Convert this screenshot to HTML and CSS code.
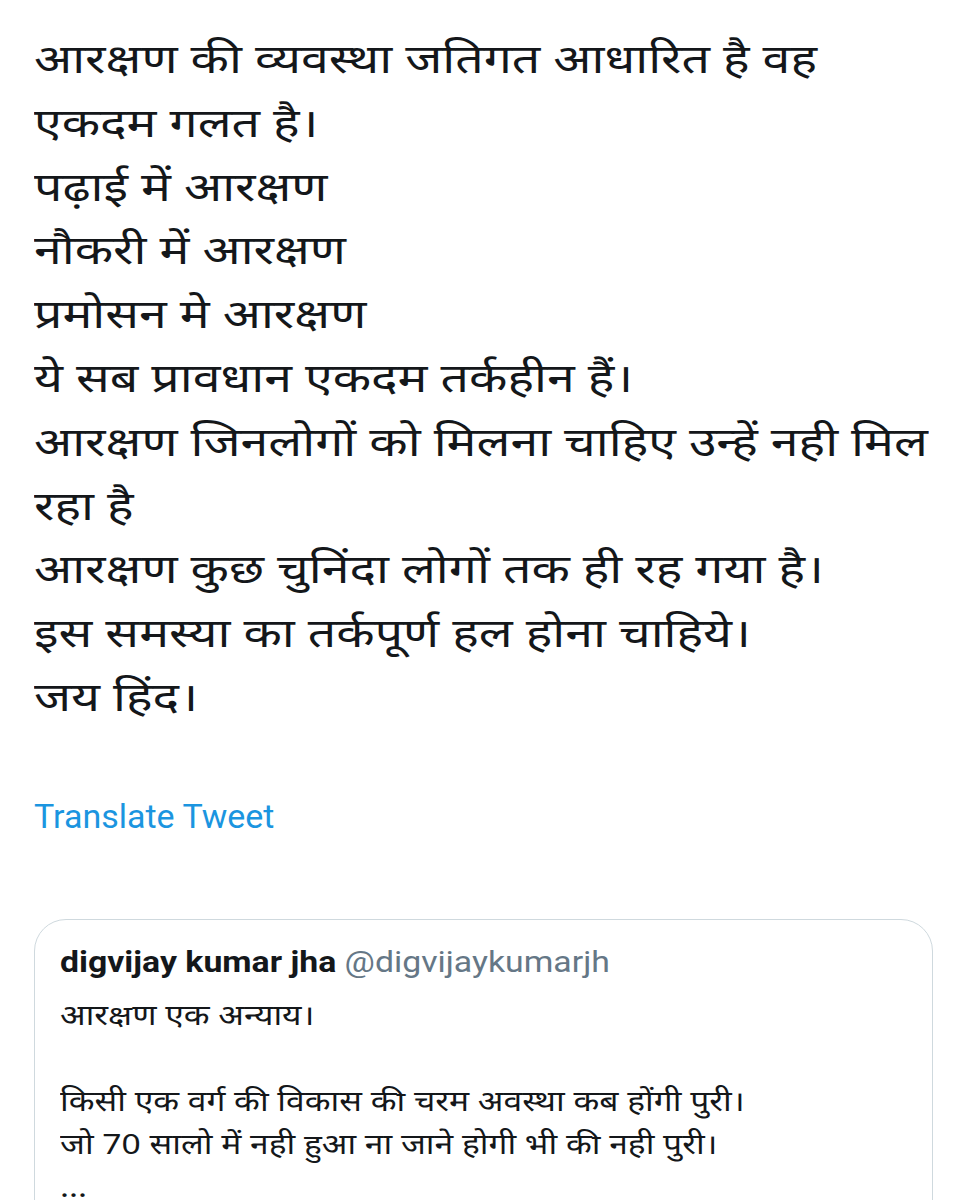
FILE: index.html
```html
<!DOCTYPE html>
<html lang="hi">
<head>
<meta charset="utf-8">
<link rel="stylesheet" href="styles.css">
</head>
<body>
<div class="tweet">
  <div class="tweet-text">
    <div class="line">आरक्षण की व्यवस्था जतिगत आधारित है वह</div>
    <div class="line">एकदम गलत है।</div>
    <div class="line">पढ़ाई में आरक्षण</div>
    <div class="line">नौकरी में आरक्षण</div>
    <div class="line">प्रमोसन मे आरक्षण</div>
    <div class="line">ये सब प्रावधान एकदम तर्कहीन हैं।</div>
    <div class="line">आरक्षण जिनलोगों को मिलना चाहिए उन्हें नही मिल</div>
    <div class="line">रहा है</div>
    <div class="line">आरक्षण कुछ चुनिंदा लोगों तक ही रह गया है।</div>
    <div class="line">इस समस्या का तर्कपूर्ण हल होना चाहिये।</div>
    <div class="line">जय हिंद।</div>
  </div>
  <div class="translate">Translate Tweet</div>
  <div class="quote">
    <div class="quote-head"><span class="q-name">digvijay kumar jha</span> <span class="q-handle">@digvijaykumarjh</span></div>
    <div class="q-text">
      <div class="q-line">आरक्षण एक अन्याय।</div>
      <div class="q-line"></div>
      <div class="q-line">किसी एक वर्ग की विकास की चरम अवस्था कब होंगी पुरी।</div>
      <div class="q-line">जो 70 सालो में नही हुआ ना जाने होगी भी की नही पुरी।</div>
      <div class="q-line">...</div>
    </div>
  </div>
</div>
</body>
</html>
```

FILE: styles.css
```css
html, body {
  margin: 0;
  padding: 0;
  background: #ffffff;
  overflow: hidden;
}
.tweet {
  padding: 26px 33px 0 34px;
  font-family: "Noto Sans", "Roboto", sans-serif;
  color: #14171a;
}
.tweet-text {
  font-size: 40px;
  transform: scaleX(1.25);
  transform-origin: 0 0;
}
.line {
  height: 63.8px;
  line-height: 63.8px;
  white-space: nowrap;
}
.translate {
  margin-top: 68px;
  font-family: Roboto, "Noto Sans", sans-serif;
  font-size: 34px;
  color: #1b95e0;
  line-height: 40px;
}
.quote {
  margin-top: 83px;
  border: 1.5px solid #cfd9de;
  border-radius: 32px;
  padding: 22px 12px 0 25px;
  height: 400px;
}
.quote-head {
  font-family: Roboto, "Noto Sans", sans-serif;
  font-size: 29px;
  line-height: 40px;
  white-space: nowrap;
  transform: scaleX(1.165);
  transform-origin: 0 0;
}
.q-name {
  font-weight: 700;
  color: #14171a;
}
.q-handle {
  color: #657786;
}
.q-text {
  font-size: 28px;
  margin-top: 11px;
  transform: scaleX(1.2);
  transform-origin: 0 0;
}
.q-line {
  height: 43px;
  line-height: 43px;
  white-space: nowrap;
}
```
